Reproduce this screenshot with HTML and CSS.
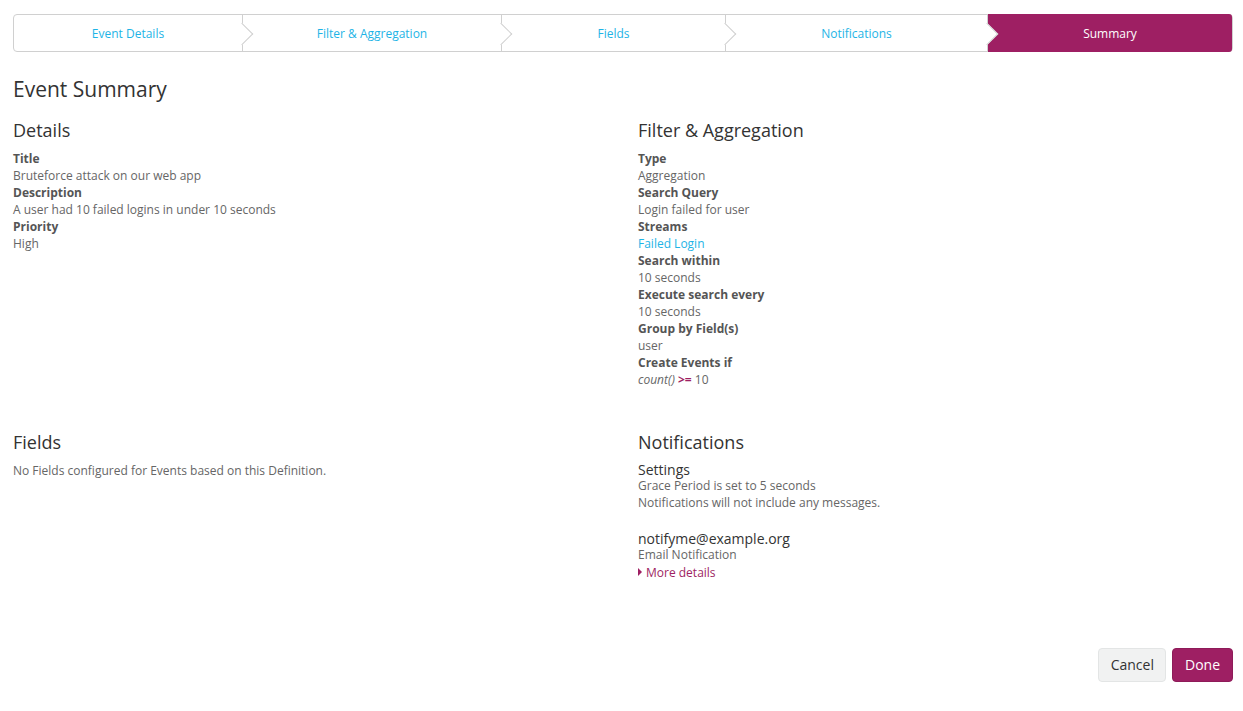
FILE: index.html
```html
<!DOCTYPE html>
<html>
<head>
<meta charset="utf-8">
<link rel="stylesheet" href="styles.css">
</head>
<body>
<div class="page">
  <nav class="steps">
    <div class="step">Event Details</div>
    <div class="step">Filter &amp; Aggregation</div>
    <div class="step">Fields</div>
    <div class="step">Notifications</div>
    <div class="step active">Summary</div>
  </nav>

  <h2 class="title">Event Summary</h2>

  <div class="grid">
    <section class="col">
      <h3 class="sect">Details</h3>
      <dl class="list">
        <dt>Title</dt><dd>Bruteforce attack on our web app</dd>
        <dt>Description</dt><dd>A user had 10 failed logins in under 10 seconds</dd>
        <dt>Priority</dt><dd>High</dd>
      </dl>
    </section>
    <section class="col">
      <h3 class="sect">Filter &amp; Aggregation</h3>
      <dl class="list">
        <dt>Type</dt><dd>Aggregation</dd>
        <dt>Search Query</dt><dd>Login failed for user</dd>
        <dt>Streams</dt><dd><a class="link">Failed Login</a></dd>
        <dt>Search within</dt><dd>10 seconds</dd>
        <dt>Execute search every</dt><dd>10 seconds</dd>
        <dt>Group by Field(s)</dt><dd>user</dd>
        <dt>Create Events if</dt><dd><em>count()</em> <strong class="op">&gt;=</strong> 10</dd>
      </dl>
    </section>
    <section class="col second">
      <h3 class="sect">Fields</h3>
      <p class="text">No Fields configured for Events based on this Definition.</p>
    </section>
    <section class="col second">
      <h3 class="sect">Notifications</h3>
      <h4 class="sub">Settings</h4>
      <p class="text">Grace Period is set to 5 seconds</p>
      <p class="text">Notifications will not include any messages.</p>
      <h4 class="sub email">notifyme@example.org</h4>
      <p class="text">Email Notification</p>
      <a class="more"><span class="caret"></span>More details</a>
    </section>
  </div>

  <div class="actions">
    <button class="btn cancel">Cancel</button>
    <button class="btn done">Done</button>
  </div>
</div>
</body>
</html>
```
FILE: styles.css
```css
* { box-sizing: border-box; }
html, body { margin: 0; padding: 0; background: #fff; }
body {
  font-family: "Open Sans", "DejaVu Sans", sans-serif;
  font-size: 12px;
  line-height: 17px;
  color: #666;
}
.page {
  padding: 14px 10px 0 13px;
}
.steps {
  display: grid;
  grid-template-columns: 229px 259px 224px 262px 1fr;
  height: 38px;
  border: 1px solid #d0d0d0;
  border-radius: 4px;
}
.step {
  position: relative;
  display: flex;
  align-items: center;
  justify-content: center;
  color: #1eb4e6;
  font-size: 12px;
  border-right: 1px solid #d0d0d0;
}
.step:first-child { border-radius: 4px 0 0 4px; }
.step::after {
  content: "";
  position: absolute;
  right: -8px;
  top: 50%;
  width: 15px;
  height: 15px;
  margin-top: -7.5px;
  background: #fff;
  border-top: 1px solid #d0d0d0;
  border-right: 1px solid #d0d0d0;
  transform: rotate(45deg);
  z-index: 2;
}
.step.active {
  background: #9e1f63;
  color: #fff;
  border-right: 0;
  margin: -1px 0 -1px 0;
  border-radius: 0 3px 3px 0;
}
.step.active::after { display: none; }

.title {
  margin: 26px 0 0 0;
  font-size: 21px;
  line-height: 23px;
  font-weight: 400;
  color: #333;
}
.grid {
  display: grid;
  grid-template-columns: 1fr 1fr;
  column-gap: 30px;
}
.sect {
  margin: 19px 0 10px 0;
  font-size: 18px;
  line-height: 20px;
  font-weight: 400;
  color: #333;
}
.second .sect { margin-top: 44px; }
.list { margin: 0; }
.list dt { font-weight: 700; color: #555; }
.list dd { margin: 0; }
.link { color: #1eb4e6; }
.op { color: #9e1f63; font-weight: 700; }
.text { margin: 0; }
.sub {
  margin: 0;
  font-size: 14px;
  line-height: 15px;
  font-weight: 400;
  color: #333;
}
.sub.email { margin-top: 20px; }
.more {
  display: inline-flex;
  align-items: center;
  color: #9e1f63;
}
.caret {
  width: 0;
  height: 0;
  border-top: 4px solid transparent;
  border-bottom: 4px solid transparent;
  border-left: 4px solid #9e1f63;
  margin-right: 4px;
}
.actions {
  display: flex;
  justify-content: flex-end;
  gap: 6px;
  margin-top: 67px;
}
.btn {
  font-family: "Open Sans", "DejaVu Sans", sans-serif;
  font-size: 14px;
  line-height: 20px;
  padding: 6px 12px;
  border-radius: 4px;
  border: 1px solid transparent;
  cursor: pointer;
}
.cancel {
  background: #f1f2f2;
  border-color: #e3e5e5;
  color: #333;
  padding: 6px 11px 6px 12px;
}
.done {
  background: #9e1f63;
  border-color: #8e1b59;
  color: #fff;
}
```
